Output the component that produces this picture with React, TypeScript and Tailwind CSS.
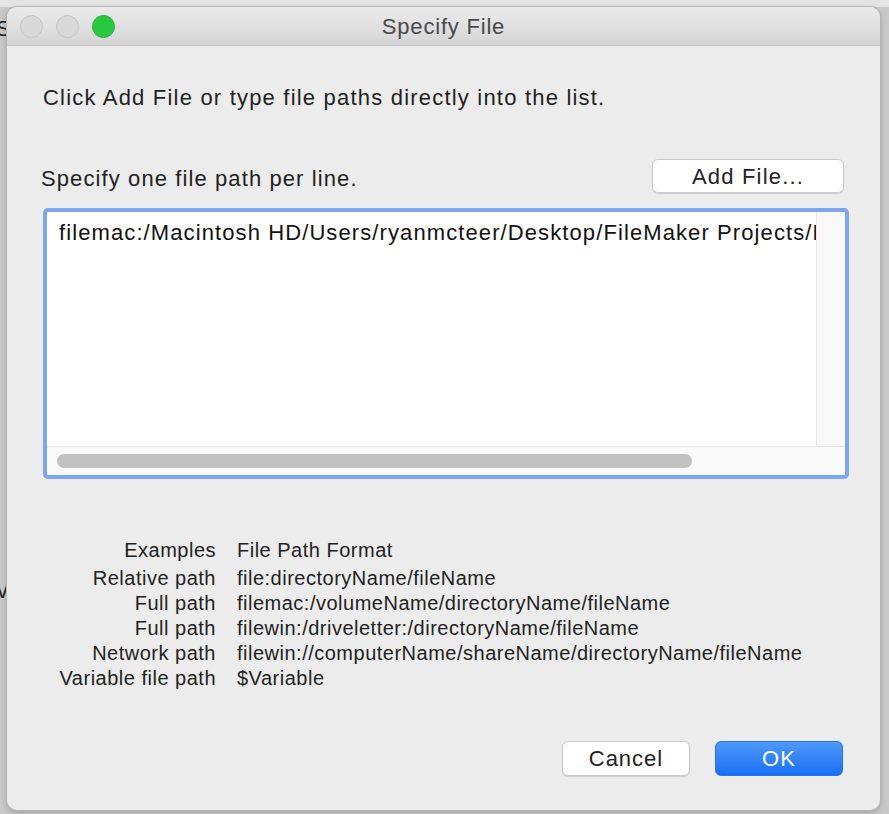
export default function App() {
  const rows = [
    { label: "Relative path", value: "file:directoryName/fileName" },
    { label: "Full path", value: "filemac:/volumeName/directoryName/fileName" },
    { label: "Full path", value: "filewin:/driveletter:/directoryName/fileName" },
    { label: "Network path", value: "filewin://computerName/shareName/directoryName/fileName" },
    { label: "Variable file path", value: "$Variable" },
  ]

  return (
    <div
      className="relative w-[889px] h-[814px] overflow-hidden bg-[#c9c9c9] pt-[7px] pl-[7px]"
      style={{ fontFamily: '"Liberation Sans", Arial, sans-serif' }}
    >
      {/* window behind */}
      <div className="absolute left-0 top-0 w-[889px] h-[7px] bg-[#e4e4e4]" />
      <span className="absolute left-[-4px] top-[12px] text-[22px] text-[#222]">S</span>
      <span className="absolute left-[-3px] top-[574px] text-[22px] text-[#222]">v</span>

      <div className="relative w-[873px] h-[803px] rounded-[10px] bg-[#ececec] shadow-[0_0_0_1px_#b5b5b5,0_2px_6px_rgba(0,0,0,0.25)] overflow-hidden flex flex-col">
        {/* title bar */}
        <div className="h-[39px] shrink-0 flex items-center px-[13px] bg-gradient-to-b from-[#ebebeb] to-[#d5d5d5] border-b border-[#c4c4c4] relative">
          <div className="flex gap-[13px]">
            <span className="w-[23px] h-[23px] rounded-full bg-[#d9d9d9] border border-[#c5c5c5]" />
            <span className="w-[23px] h-[23px] rounded-full bg-[#d9d9d9] border border-[#c5c5c5]" />
            <span className="w-[23px] h-[23px] rounded-full bg-[#28c840] border border-[#20b336]" />
          </div>
          <div className="absolute inset-0 flex items-center justify-center text-[22px] tracking-[0.8px] text-[#4b4b4b]">
            Specify File
          </div>
        </div>

        {/* body */}
        <div className="flex-1 flex flex-col pl-[36px] pr-[24px] text-[#222]">
          <p className="mt-[39px] text-[22px] leading-[26px] tracking-[1.2px]">
            Click Add File or type file paths directly into the list.
          </p>

          <div className="mt-[48px] flex items-center justify-between pr-[6px]">
            <span className="text-[22px] leading-[26px] tracking-[1.1px] -ml-[2px] mt-[6px]">
              Specify one file path per line.
            </span>
            <button className="mr-[6px] w-[192px] h-[34px] rounded-[6px] bg-white border border-[#c9c9c9] shadow-[0_1px_1px_rgba(0,0,0,0.12)] text-[22px] tracking-[1.2px] text-[#222]">
              Add File...
            </button>
          </div>

          {/* list */}
          <div className="mt-[15px] w-[806px] h-[271px] rounded-[5px] border-[4px] border-[#7aa7ef] bg-white flex flex-col overflow-hidden">
            <div className="flex-1 flex">
              <div className="flex-1 overflow-hidden whitespace-nowrap pl-[12px] pt-[8px] text-[22px] leading-[26px] tracking-[1.1px] text-[#111]">
                filemac:/Macintosh HD/Users/ryanmcteer/Desktop/FileMaker Projects/MyFile
              </div>
              <div className="w-[29px] bg-[#f9f9f9] border-l border-[#e8e8e8]" />
            </div>
            <div className="h-[29px] shrink-0 bg-[#fafafa] border-t border-[#e6e6e6] flex items-center pl-[10px]">
              <div className="w-[635px] h-[14px] rounded-full bg-[#c2c2c2]" />
            </div>
          </div>

          {/* examples */}
          <div className="mt-[59px] grid grid-cols-[173px_1fr] gap-x-[21px] text-[20px] leading-[25px] tracking-[0.5px] text-[#222]">
            <span className="text-right">Examples</span>
            <span>File Path Format</span>
            <div className="col-span-2 h-[3px]" />
            {rows.map((r, i) => (
              <div key={i} className="contents">
                <span className="text-right whitespace-nowrap">{r.label}</span>
                <span className="whitespace-nowrap">{r.value}</span>
              </div>
            ))}
          </div>

          <div className="mt-auto mb-[34px] flex justify-end gap-[25px] pr-[13px]">
            <button className="w-[128px] h-[35px] rounded-[6px] bg-white border border-[#c9c9c9] shadow-[0_1px_1px_rgba(0,0,0,0.12)] text-[22px] tracking-[1px] text-[#222]">
              Cancel
            </button>
            <button className="w-[128px] h-[35px] rounded-[6px] bg-gradient-to-b from-[#4c98f9] to-[#1a6ef5] border border-[#2a72e8] text-[22px] tracking-[1px] text-white">
              OK
            </button>
          </div>
        </div>
      </div>
    </div>
  )
}
